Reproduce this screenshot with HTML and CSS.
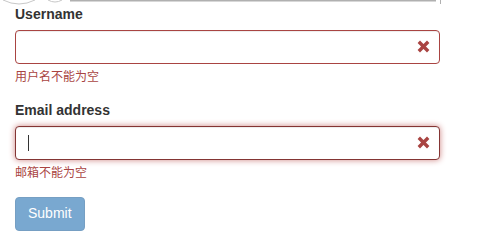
FILE: index.html
```html
<!DOCTYPE html>
<html lang="en">
<head>
    <meta charset="UTF-8">
    <meta name="viewport" content="width=device-width, initial-scale=1.0">
    <title>Register</title>
    <link rel="stylesheet" href="styles.css">
</head>
<body>
    <svg class="top-strip" width="502" height="5" viewBox="0 0 502 5">
        <path d="M3 0 Q19 8 35 0" fill="none" stroke="#c8c8c8" stroke-width="1"/>
        <path d="M48 0 Q55 4 62 0" fill="none" stroke="#c8c8c8" stroke-width="1"/>
        <rect x="70" y="0" width="366" height="1.5" fill="#b0b0b0"/>
        <rect x="440" y="0" width="1" height="4" fill="#b0b0b0"/>
    </svg>

    <div class="container">
        <form id="registerForm">
            <div class="form-group has-error">
                <label for="username">Username</label>
                <div class="input-wrap">
                    <input type="text" id="username" class="form-control">
                    <span class="feedback">
                        <svg width="13" height="13" viewBox="0 0 13 13">
                            <path d="M1.8 1.8 L11.2 11.2 M11.2 1.8 L1.8 11.2" stroke="#a94442" stroke-width="3.4"/>
                        </svg>
                    </span>
                </div>
                <div class="help-block">用户名不能为空</div>
            </div>

            <div class="form-group has-error">
                <label for="email">Email address</label>
                <div class="input-wrap">
                    <input type="email" id="email" class="form-control focused">
                    <span class="caret"></span>
                    <span class="feedback">
                        <svg width="13" height="13" viewBox="0 0 13 13">
                            <path d="M1.8 1.8 L11.2 11.2 M11.2 1.8 L1.8 11.2" stroke="#a94442" stroke-width="3.4"/>
                        </svg>
                    </span>
                </div>
                <div class="help-block">邮箱不能为空</div>
            </div>

            <button type="submit" class="btn" disabled>Submit</button>
        </form>
    </div>
</body>
</html>
```

FILE: styles.css
```css
body {
    font-family: "Liberation Sans", Arial, "Noto Sans CJK SC", sans-serif;
    font-size: 14px;
    line-height: 1.42857;
    color: #333;
    margin: 0;
    background-color: #fff;
}

.top-strip {
    display: block;
}

.container {
    width: 425px;
    padding: 0 15px;
}

.form-group {
    margin-bottom: 15px;
}

label {
    display: block;
    margin-bottom: 5px;
    font-weight: bold;
}

.input-wrap {
    position: relative;
}

.form-control {
    display: block;
    width: 100%;
    height: 34px;
    padding: 6px 42px 6px 12px;
    font-family: inherit;
    font-size: 14px;
    border: 1px solid #ccc;
    border-radius: 4px;
    box-sizing: border-box;
    box-shadow: inset 0 1px 1px rgba(0,0,0,0.075);
    outline: none;
}

.has-error .form-control {
    border-color: #a94442;
}

.has-error .form-control.focused {
    border-color: #843534;
    box-shadow: inset 0 1px 1px rgba(0,0,0,0.075), 0 0 6px #ce8483;
}

.feedback {
    position: absolute;
    top: 0;
    right: 0;
    width: 34px;
    height: 34px;
    display: flex;
    align-items: center;
    justify-content: center;
}

.feedback svg {
    display: block;
}

.caret {
    position: absolute;
    left: 13px;
    top: 9px;
    width: 1px;
    height: 16px;
    background: #333;
}

.help-block {
    margin-top: 5px;
    margin-bottom: 10px;
    font-size: 12px;
    line-height: 17px;
}

.has-error .help-block {
    color: #a94442;
}

.btn {
    display: block;
    height: 34px;
    padding: 6px 12px;
    font-family: inherit;
    font-size: 14px;
    line-height: 1.42857;
    color: #fff;
    background-color: #337ab7;
    border: 1px solid #2e6da4;
    border-radius: 4px;
    opacity: 0.65;
    cursor: not-allowed;
}
```
